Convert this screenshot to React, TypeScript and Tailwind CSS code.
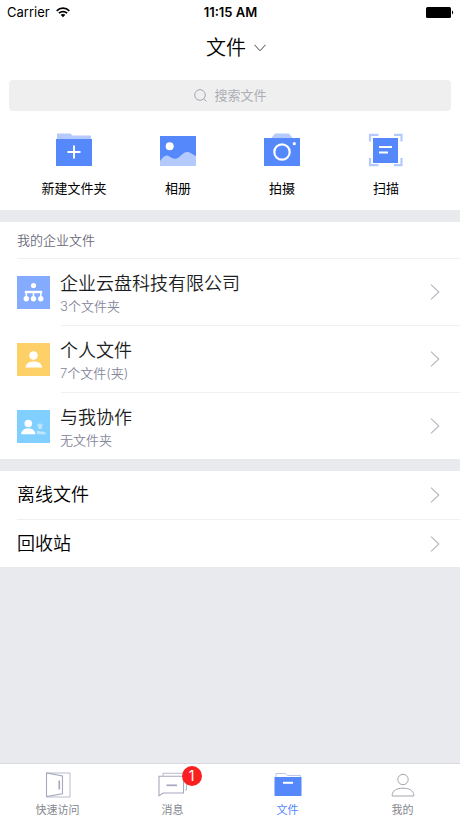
import React, { useState } from "react";

type IconProps = { className?: string };

const WifiIcon = () => (
  <svg width="14" height="11" viewBox="0 0 14 11" fill="none" stroke="#000" strokeWidth="1.7">
    <path d="M0.7 3.8C4.2 0.3 9.8 0.3 13.3 3.8" />
    <path d="M2.9 6.2C5.2 4 8.8 4 11.1 6.2" />
    <path d="M7 10.2L4.6 7.8C5.9 6.7 8.1 6.7 9.4 7.8Z" fill="#000" stroke="none" />
  </svg>
);

const BatteryIcon = () => (
  <svg width="28" height="11" viewBox="0 0 28 11">
    <rect width="25" height="11" rx="1.5" fill="#000" />
    <path d="M26 3.6C27.6 4.2 27.6 6.8 26 7.4Z" fill="#000" />
  </svg>
);

const SearchIcon = () => (
  <svg width="13" height="13" viewBox="0 0 13 13" fill="none" stroke="#a3a5ad" strokeWidth="1">
    <circle cx="6" cy="6" r="5.3" />
    <path d="M9.7 9.7L12.5 12.5" />
  </svg>
);

const ChevronRight = () => (
  <svg className="shrink-0" width="10" height="16" viewBox="0 0 10 16" fill="none" stroke="#b4b7be" strokeWidth="1.1">
    <path d="M1 0.6L8.8 8L1 15.4" />
  </svg>
);

const NewFolderIcon = () => (
  <svg width="36" height="34" viewBox="0 0 36 34">
    <path d="M1 0.5H14.5L16.5 2.5H35V8H1Z" fill="#b5cafc" />
    <rect y="6" width="36" height="27" fill="#5488fb" />
    <path d="M18 12.5V25.5M11.5 19H24.5" stroke="#fff" strokeWidth="2" />
  </svg>
);

const AlbumIcon = () => (
  <svg width="36" height="34" viewBox="0 0 36 34">
    <rect y="3" width="36" height="30" fill="#5488fb" />
    <circle cx="9.7" cy="13.3" r="4" fill="#fff" />
    <path d="M0 28C2.5 24.5 5 21.5 8 22.8C11.5 24.5 14.5 27.5 18.5 24.5C22 21.8 24.5 17.8 29 19.2C32 20.2 33.5 22 36 23V33H0Z" fill="#b5cafc" />
  </svg>
);

const CameraIcon = () => (
  <svg width="36" height="34" viewBox="0 0 36 34">
    <path d="M11 0.5H25L29 5.5H7Z" fill="#b5cafc" />
    <rect y="5" width="36" height="28" fill="#5488fb" />
    <circle cx="18" cy="19" r="7.7" fill="none" stroke="#fff" strokeWidth="2.2" />
    <circle cx="30.3" cy="10.7" r="1.6" fill="#fff" />
  </svg>
);

const ScanIcon = () => (
  <svg width="36" height="34" viewBox="0 0 36 34">
    <path d="M2 8.5V1.8H10.5M26 1.8H33.5V8.5M33.5 25V32.2H26M10.5 32.2H2V25" fill="none" stroke="#b5cafc" strokeWidth="2.2" />
    <rect x="5" y="5" width="25" height="25" fill="#5488fb" />
    <path d="M11 14H24M11 19.5H20" stroke="#fff" strokeWidth="2" />
  </svg>
);

const CompanyIcon = () => (
  <svg className="shrink-0" width="33" height="33" viewBox="0 0 33 33">
    <rect width="33" height="33" fill="#84abfd" />
    <circle cx="16.5" cy="9.5" r="2.6" fill="#fff" />
    <path d="M16.5 16V22M9.3 22V16M23.8 16V22" stroke="#fff" strokeWidth="1.6" />
    <path d="M7.8 16H25.2" stroke="#fff" strokeWidth="2.4" />
    <circle cx="9.3" cy="22.8" r="2.7" fill="#fff" />
    <circle cx="16.5" cy="22.8" r="2.7" fill="#fff" />
    <circle cx="23.8" cy="22.8" r="2.7" fill="#fff" />
  </svg>
);

const PersonalIcon = () => (
  <svg className="shrink-0" width="33" height="33" viewBox="0 0 33 33">
    <rect width="33" height="33" fill="#fdd168" />
    <circle cx="16.5" cy="12.5" r="4.3" fill="#fff" />
    <path d="M8.5 24.5C9 20.5 12 18.5 16.8 18.5C21.6 18.5 24.7 20.5 25.2 24.5Z" fill="#fff" />
  </svg>
);

const ShareIcon = () => (
  <svg className="shrink-0" width="33" height="33" viewBox="0 0 33 33">
    <rect width="33" height="33" fill="#80cffe" />
    <circle cx="11.3" cy="13.5" r="3.8" fill="#fff" />
    <path d="M4 24.3C4.5 20.5 7 18.6 11.3 18.6C15.6 18.6 18 20.5 18.5 24.3Z" fill="#fff" />
    <path d="M20 14L22 14.4L23 12.5L24 14.4L26.2 14L25 16.5L24.8 19H21.4L21 16.5Z" fill="#bce5fe" />
    <path d="M19.5 20.5C21.5 20 22.5 22 25 21.5C27 21.3 28.8 22.5 29.2 24.3H20.3Z" fill="#bce5fe" />
  </svg>
);

const DoorIcon = ({ className }: IconProps) => (
  <svg className={className} width="28" height="26" viewBox="0 0 28 26" fill="none" stroke="#a6a8bd">
    <path d="M3 1H26V25H3" strokeWidth="0.8" />
    <path d="M2.5 1V24.5L18.5 21.8V4Z" strokeWidth="1.1" />
    <path d="M15.3 8.5V17.5" strokeWidth="1.7" />
  </svg>
);

const MessageIcon = ({ className }: IconProps) => (
  <svg className={className} width="30" height="26" viewBox="0 0 30 26" fill="none" stroke="#a6a8bd">
    <path d="M5 4V1.3H28.5V18H27" strokeWidth="0.8" />
    <path d="M1 4.2H25.5V21H5.2L1 23.8Z" strokeWidth="1.1" />
    <path d="M8.5 13.3H19" strokeWidth="1.7" />
  </svg>
);

const FilesIcon = ({ className }: IconProps) => (
  <svg className={className} width="28" height="26" viewBox="0 0 28 26">
    <path d="M2 6V1.5H11.5L13.5 3.5H26.5V6" fill="none" stroke="#a9b9e6" strokeWidth="0.8" />
    <rect x="0.5" y="5" width="27" height="19" fill="#5488fb" />
    <path d="M9 10.8H19" stroke="#fff" strokeWidth="2" />
  </svg>
);

const UserIcon = ({ className }: IconProps) => (
  <svg className={className} width="24" height="26" viewBox="0 0 24 26" fill="none" stroke="#a4a5ae" strokeWidth="1">
    <circle cx="12" cy="7.5" r="5.2" />
    <path d="M1.2 24V22.8C1.8 18.6 5.5 16.2 12 16.2C18.5 16.2 22.2 18.6 22.8 22.8V24Z" />
  </svg>
);

const actions = [
  { label: "新建文件夹", icon: <NewFolderIcon /> },
  { label: "相册", icon: <AlbumIcon /> },
  { label: "拍摄", icon: <CameraIcon /> },
  { label: "扫描", icon: <ScanIcon /> },
];

const folders = [
  { title: "企业云盘科技有限公司", info: "3个文件夹", icon: <CompanyIcon /> },
  { title: "个人文件", info: "7个文件(夹)", icon: <PersonalIcon /> },
  { title: "与我协作", info: "无文件夹", icon: <ShareIcon /> },
];

const links = ["离线文件", "回收站"];

const tabs = [
  { label: "快速访问", Icon: DoorIcon, badge: 0 },
  { label: "消息", Icon: MessageIcon, badge: 1 },
  { label: "文件", Icon: FilesIcon, badge: 0 },
  { label: "我的", Icon: UserIcon, badge: 0 },
];

const App: React.FC = () => {
  const [query, setQuery] = useState("");
  const [activeTab, setActiveTab] = useState("文件");

  return (
    <div className="min-h-screen flex flex-col bg-[#e9eaee] text-black font-['Inter','Noto_Sans_CJK_SC',sans-serif]">
      {/* Status bar + title */}
      <header className="bg-white">
        <div className="grid grid-cols-3 items-center h-[25px] pl-[7px] pr-1.5 text-[13px]">
          <div className="flex items-center gap-1.5">
            <span>Carrier</span>
            <WifiIcon />
          </div>
          <span className="text-center font-semibold">11:15 AM</span>
          <div className="flex justify-end">
            <BatteryIcon />
          </div>
        </div>
        <div className="flex justify-center h-[45px]">
          <button className="flex items-center gap-2 pl-3">
            <h1 className="text-xl leading-none font-[350]">文件</h1>
            <svg width="12" height="8" viewBox="0 0 12 8" fill="none" stroke="#444" strokeWidth="1">
              <path d="M0.5 0.8L6 6.8L11.5 0.8" />
            </svg>
          </button>
        </div>
      </header>

      {/* Search + quick actions */}
      <section className="bg-white pt-2.5 pb-3">
        <label className="flex items-center justify-center gap-2 h-[31px] mx-[9px] pl-1 rounded bg-[#efeff0]">
          <SearchIcon />
          <input
            type="text"
            aria-label="搜索文件"
            placeholder="搜索文件"
            value={query}
            onChange={(e) => setQuery(e.target.value)}
            className="w-14 text-[13px] outline-none placeholder:text-[#adaeb4]"
          />
        </label>
        <div className="grid grid-cols-4 px-[22px] pt-[22px]">
          {actions.map((a) => (
            <button key={a.label} className="flex flex-col items-center gap-[11px]">
              {a.icon}
              <span className="text-[13px] leading-5">{a.label}</span>
            </button>
          ))}
        </div>
      </section>

      <section className="bg-white mt-3">
        <h2 className="h-9 px-[17px] text-[13px] leading-9 font-[350] text-[#6b6b7b]">我的企业文件</h2>
        <ul>
          {folders.map((f, i) => (
            <li key={f.title}>
              <div className={`h-px bg-[#f0f0f3] ${i === 0 ? "ml-[17px]" : "ml-[61px]"}`} />
              <a href="#" className="flex items-center h-[66px] pl-[17px] pr-5">
                {f.icon}
                <div className="flex-1 pl-2.5 pt-1">
                  <p className="text-lg leading-6 font-[350] text-[#1d1e22]">{f.title}</p>
                  <p className="text-[13px] leading-5 font-[350] text-[#85879b]">{f.info}</p>
                </div>
                <ChevronRight />
              </a>
            </li>
          ))}
        </ul>
      </section>

      <section className="bg-white mt-3">
        {links.map((text, i) => (
          <a
            key={text}
            href="#"
            className="flex items-center pl-[17px]"
          >
            <span className={`flex flex-1 items-center justify-between h-12 pr-5 text-lg font-[350] ${i > 0 ? "border-t border-[#f0f0f3]" : ""}`}>
              {text}
              <ChevronRight />
            </span>
          </a>
        ))}
      </section>

      {/* Bottom tabs */}
      <nav className="mt-auto grid grid-cols-4 h-[55px] border-t border-[#d9dade] bg-white">
        {tabs.map(({ label, Icon, badge }) => (
          <button
            key={label}
            onClick={() => setActiveTab(label)}
            className={`flex flex-col items-center pt-2 text-[11px] ${activeTab === label ? "text-[#5488fb]" : "text-[#85868e]"}`}
          >
            <span className="relative">
              <Icon />
              {badge > 0 && (
                <span className="absolute -top-1.5 -right-3.5 flex size-5 items-center justify-center rounded-full bg-[#f9201f] text-sm text-white">
                  {badge}
                </span>
              )}
            </span>
            <span className="pt-1 leading-4">{label}</span>
          </button>
        ))}
      </nav>
    </div>
  );
};

export default App;
